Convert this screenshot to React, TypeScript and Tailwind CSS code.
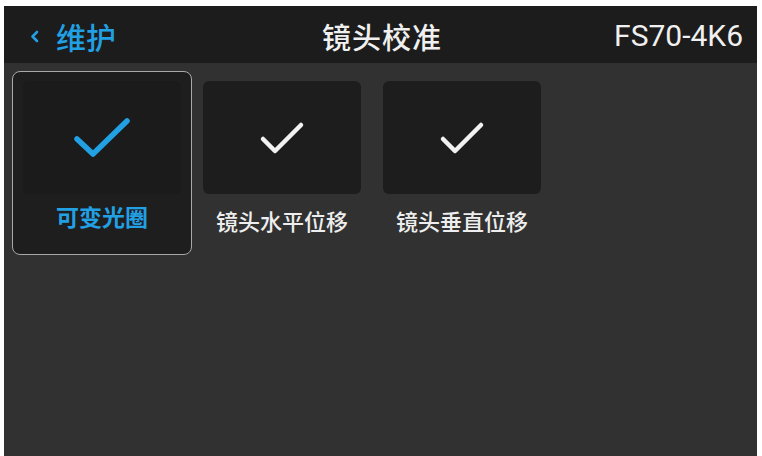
import type { ReactNode } from 'react'

const FONT = '"Noto Sans CJK SC", "Liberation Sans", sans-serif'

interface CalibItem {
  label: string
  active?: boolean
}

const items: CalibItem[] = [
  { label: '可变光圈', active: true },
  { label: '镜头水平位移' },
  { label: '镜头垂直位移' },
]

function Check({ active }: { active?: boolean }) {
  if (active) {
    return (
      <svg width="58" height="46" viewBox="0 0 58 46" fill="none">
        <path d="M4 24 L20 39 L54 6" stroke="#22a0e4" strokeWidth="5.5" strokeLinecap="round" strokeLinejoin="round" />
      </svg>
    )
  }
  return (
    <svg width="46" height="38" viewBox="0 0 46 38" fill="none">
      <path d="M4 20 L16 32 L42 6" stroke="#f2f2f2" strokeWidth="4.5" strokeLinecap="round" strokeLinejoin="round" />
    </svg>
  )
}

function Card({ item }: { item: CalibItem }) {
  return (
    <div
      className={`flex h-[184px] w-[180px] flex-col items-center rounded-lg pt-[9px] ${
        item.active ? 'border-[1.5px] border-[#a9a9a9] bg-[#1e1e1e]' : 'border-[1.5px] border-transparent'
      }`}
    >
      <div
        className={`flex h-[113px] w-[158px] items-center justify-center rounded-md ${
          item.active ? 'bg-[#1b1b1b]' : 'bg-[#1d1d1d]'
        }`}
      >
        <Check active={item.active} />
      </div>
      <span
        className={`leading-[26px] ${
          item.active
            ? 'mt-[9px] text-[23px] font-bold text-[#22a0e4]'
            : 'mt-[13px] text-[22px] font-medium text-[#eeeeee]'
        }`}
      >
        {item.label}
      </span>
    </div>
  )
}

function Header({ children }: { children?: ReactNode }) {
  return (
    <div className="flex h-[57px] shrink-0 items-center bg-[#1c1c1c] pl-[26px] pr-[14px] pt-[3px]">
      {children}
    </div>
  )
}

export default function App() {
  return (
    <div className="h-[456px] w-[762px] overflow-hidden bg-white pl-[4px] pr-[5px] pt-[6px]" style={{ fontFamily: FONT }}>
      <div className="flex h-full flex-col">
        <Header>
          <div className="flex w-[212px] items-center gap-[17px] text-[#22a0e4]">
            <svg width="9" height="13" viewBox="0 0 9 13" fill="none">
              <path d="M7 2 L2.5 6.5 L7 11" stroke="#22a0e4" strokeWidth="2.6" strokeLinecap="round" strokeLinejoin="round" />
            </svg>
            <span className="text-[30px] font-medium leading-none">维护</span>
          </div>
          <div className="flex-1 pr-[9px] text-center text-[29px] font-medium leading-none tracking-[1px] text-[#f0f0f0]">
            镜头校准
          </div>
          <div
            className="w-[212px] text-right text-[30px] leading-none text-[#f0f0f0]"
            style={{ fontFamily: '"Roboto", "Liberation Sans", sans-serif' }}
          >
            FS70-4K6
          </div>
        </Header>
        <div className="flex flex-1 items-start bg-[#313131] pl-[8px] pt-[8px]">
          {items.map((it) => (
            <Card key={it.label} item={it} />
          ))}
        </div>
      </div>
    </div>
  )
}
